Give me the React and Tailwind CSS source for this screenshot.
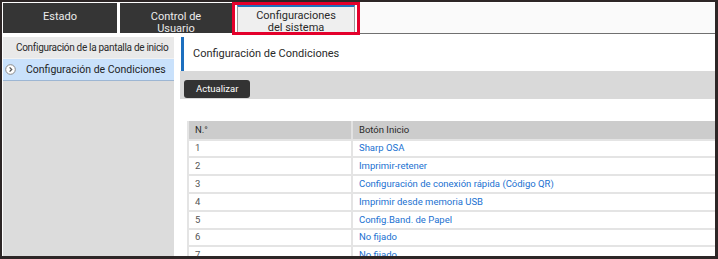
const rows = [
  ["1", "Sharp OSA"],
  ["2", "Imprimir-retener"],
  ["3", "Configuración de conexión rápida (Código QR)"],
  ["4", "Imprimir desde memoria USB"],
  ["5", "Config.Band. de Papel"],
  ["6", "No fijado"],
  ["7", "No fijado"],
];

function DarkTab({ width, children }) {
  return (
    <div
      className={`${width} h-[30px] bg-[#353535] pt-[8px] text-center text-[11px] leading-[12px] text-[#ececec]`}
    >
      {children}
    </div>
  );
}

function CircleChevron() {
  return (
    <svg width="11" height="11" viewBox="0 0 11 11" className="shrink-0">
      <circle cx="5.5" cy="5.5" r="4.8" fill="#fff" stroke="#8a8a8a" strokeWidth="1" />
      <path d="M4.6 3.4 L6.7 5.5 L4.6 7.6" fill="none" stroke="#555" strokeWidth="1.3" />
    </svg>
  );
}

export default function App() {
  return (
    <div className="h-[259px] w-[718px] overflow-hidden border-b-[3px] border-l-2 border-r-[3px] border-t-2 border-[#2d2626] bg-white pl-px pt-px font-['Roboto',sans-serif]">
      {/* tabs */}
      <div className="flex h-[31px]">
        <DarkTab width="w-[114px]">Estado</DarkTab>
        <div className="w-[3px]" />
        <DarkTab width="w-[112px]">
          Control de
          <br />
          Usuario
        </DarkTab>
        <div className="relative flex w-[128px] px-[5px] py-[2px]">
          <div className="flex-1 border-x border-t-2 border-x-[#9a9a9a] border-t-[#1e73be] bg-[#efefef] pt-[3px] text-center text-[11px] leading-[12px] text-[#2a2a2a]">
            Configuraciones
            <br />
            del sistema
          </div>
          <div className="absolute -bottom-px -top-px left-0 right-0 border-[3px] border-[#e4002b]" />
        </div>
        <div className="flex-1 border-b border-[#707070] bg-[#fafafa]" />
      </div>

      {/* body */}
      <div className="mt-[3px] flex h-[219px]">
        <div className="w-[171px] shrink-0 bg-[#dcdcdc]">
          <div className="flex h-[22px] items-center border-b border-[#f2f2f2] bg-[#e9e9e9] pl-[13px] text-[10px] tracking-[-0.3px] text-[#2a2a2a]">
            Configuración de la pantalla de inicio
          </div>
          <div className="flex h-[22px] items-center border-b border-[#9db6d3] bg-[#c9e1fb] pl-[2px] text-[10.5px] text-[#1e1e1e]">
            <CircleChevron />
            <span className="ml-[10px]">Configuración de Condiciones</span>
          </div>
        </div>

        <div className="ml-[6px] flex min-w-0 flex-1 flex-col">
          <div className="flex h-[34px] shrink-0">
            <div className="ml-px w-[3px] bg-[#1c6fbf]" />
            <div className="flex flex-1 items-center pl-[9px] text-[11px] text-[#2a2a2a]">
              Configuración de Condiciones
            </div>
          </div>
          <div className="h-[28px] shrink-0 bg-[#d9d9d9] pl-[4px] pt-[4px]">
            <button className="h-[18px] rounded-[3px] bg-[#333] px-[12px] text-[9.5px] leading-[18px] text-white">
              Actualizar
            </button>
          </div>

          <div className="ml-[7px] mt-[22px] shrink-0 border-l-2 border-[#e4e4e4] text-[9.5px]">
            <div className="flex h-[17.7px] items-center bg-[#cccccc] text-[#2a2a2a]">
              <div className="flex h-full w-[164px] items-center border-r-2 border-[#e2e2e2] pl-[6px]">N.°</div>
              <div className="pl-[6px]">Botón Inicio</div>
            </div>
            {rows.map(([n, label]) => (
              <div key={n} className="flex h-[17.8px] items-center border-t-2 border-[#e4e4e4]">
                <div className="flex h-full w-[164px] items-center border-r-2 border-[#e4e4e4] pl-[6px] text-[#555]">
                  {n}
                </div>
                <div className="pl-[6px] text-[#2171d1]">{label}</div>
              </div>
            ))}
          </div>
        </div>
      </div>
    </div>
  );
}
